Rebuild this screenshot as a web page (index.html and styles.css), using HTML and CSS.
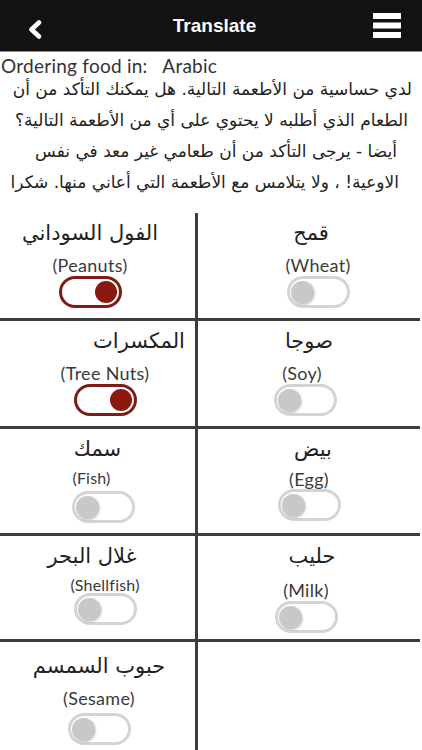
FILE: index.html
```html
<!DOCTYPE html>
<html lang="en">
<head>
<meta charset="utf-8">
<title>Translate</title>
<link rel="stylesheet" href="styles.css">
</head>
<body>
<header class="topbar">
  <svg class="back" width="14" height="19" viewBox="0 0 14 19" aria-hidden="true"><polyline points="11,2.5 3.5,9.5 11,16.5" fill="none" stroke="#fff" stroke-width="4.6" stroke-linecap="round" stroke-linejoin="round"/></svg>
  <h1 class="title">Translate</h1>
  <svg class="menu" width="28" height="25" viewBox="0 0 28 25" aria-hidden="true"><rect x="0" y="0" width="28" height="6" fill="#fff"/><rect x="0" y="9.5" width="28" height="6" fill="#fff"/><rect x="0" y="19" width="28" height="6" fill="#fff"/></svg>
</header>

<p class="intro">Ordering food in:   Arabic</p>
<div class="message" dir="rtl">
  <div class="mline l1">لدي حساسية من الأطعمة التالية. هل يمكنك التأكد من أن</div>
  <div class="mline l2">الطعام الذي أطلبه لا يحتوي على أي من الأطعمة التالية؟</div>
  <div class="mline l3">أيضا - يرجى التأكد من أن طعامي غير معد في نفس</div>
  <div class="mline l4">الاوعية! ، ولا يتلامس مع الأطعمة التي أعاني منها. شكرا</div>
</div>

<section class="grid">
  <div class="row">
    <div class="cell left peanuts">
      <div class="ar">الفول السوداني</div>
      <div class="en">(Peanuts)</div>
      <div class="toggle on"><span class="knob"></span></div>
    </div>
    <div class="cell right wheat">
      <div class="ar">قمح</div>
      <div class="en">(Wheat)</div>
      <div class="toggle"><span class="knob"></span></div>
    </div>
  </div>
  <div class="row">
    <div class="cell left treenuts">
      <div class="ar">المكسرات</div>
      <div class="en">(Tree Nuts)</div>
      <div class="toggle on"><span class="knob"></span></div>
    </div>
    <div class="cell right soy">
      <div class="ar">صوجا</div>
      <div class="en">(Soy)</div>
      <div class="toggle"><span class="knob"></span></div>
    </div>
  </div>
  <div class="row">
    <div class="cell left fish">
      <div class="ar">سمك</div>
      <div class="en small">(Fish)</div>
      <div class="toggle"><span class="knob"></span></div>
    </div>
    <div class="cell right egg">
      <div class="ar">بيض</div>
      <div class="en">(Egg)</div>
      <div class="toggle"><span class="knob"></span></div>
    </div>
  </div>
  <div class="row">
    <div class="cell left shellfish">
      <div class="ar">غلال البحر</div>
      <div class="en small">(Shellfish)</div>
      <div class="toggle"><span class="knob"></span></div>
    </div>
    <div class="cell right milk">
      <div class="ar">حليب</div>
      <div class="en">(Milk)</div>
      <div class="toggle"><span class="knob"></span></div>
    </div>
  </div>
  <div class="row">
    <div class="cell left sesame">
      <div class="ar">حبوب السمسم</div>
      <div class="en">(Sesame)</div>
      <div class="toggle"><span class="knob"></span></div>
    </div>
    <div class="cell right"></div>
  </div>
</section>
</body>
</html>
```
FILE: styles.css
```css
html, body {
  margin: 0;
  padding: 0;
  background: #fff;
}
body {
  width: 422px;
  height: 750px;
  overflow: hidden;
  font-family: "Lato", "DejaVu Sans", sans-serif;
  color: #333;
}

/* top bar */
.topbar {
  height: 51px;
  background: #121212;
  border-bottom: 1px solid #8a8a8a;
  display: grid;
  grid-template-columns: 1fr auto 1fr;
  align-items: center;
  padding: 0 21px 0 28px;
}
.back {
  justify-self: start;
  margin-top: 7px;
}
.title {
  margin: 0;
  font-family: "Liberation Sans", "DejaVu Sans", sans-serif;
  font-weight: bold;
  font-size: 19px;
  color: #fff;
  line-height: 22px;
}
.menu {
  justify-self: end;
}

/* intro text */
.intro {
  margin: 0;
  padding: 3px 0 0 1px;
  font-size: 19px;
  letter-spacing: 0.25px;
  line-height: 22px;
  white-space: pre;
  color: #333;
}
.message {
  margin-top: -3px;
  font-family: "DejaVu Sans", sans-serif;
  font-size: 17px;
  line-height: 31px;
  color: #222;
}
.mline {
  white-space: nowrap;
  text-align: right;
}
.l1 { padding-right: 10px; }
.l2 { padding-right: 14px; }
.l3 { padding-right: 25px; }
.l4 { padding-right: 23px; }

/* allergen grid */
.grid {
  width: 420px;
  margin-top: 15px;
}
.row {
  display: flex;
  height: 105px;
  border-bottom: 3px solid #3d3d3d;
}
.row:nth-child(3) { height: 104px; }
.row:nth-child(4) { height: 103px; }
.row:last-child {
  border-bottom: none;
  height: 110px;
}
.cell {
  display: flex;
  flex-direction: column;
  align-items: center;
  padding-top: 4px;
  box-sizing: border-box;
}
.cell.left {
  width: 198px;
  border-right: 3px solid #3d3d3d;
}
.cell.right {
  flex: 1;
}
.ar {
  font-family: "DejaVu Sans", sans-serif;
  font-size: 21px;
  line-height: 32px;
  height: 32px;
  color: #222;
  white-space: nowrap;
}
.en {
  margin-top: 6px;
  font-size: 18px;
  letter-spacing: 0.3px;
  line-height: 20px;
  color: #3a3a3a;
  white-space: nowrap;
}
.en.small {
  margin-top: 4px;
  font-size: 16px;
  letter-spacing: 0.2px;
  line-height: 18px;
}

/* toggles */
.toggle {
  margin-top: 1px;
  width: 63px;
  height: 32px;
  box-sizing: border-box;
  border-radius: 16px;
  border: 3px solid #d4d4d4;
  background: #fff;
  display: flex;
  align-items: center;
  padding: 0 1px;
}
.knob {
  width: 23px;
  height: 23px;
  border-radius: 50%;
  background: #c8c8c8;
  box-shadow: 1px 1px 2px rgba(0, 0, 0, 0.18);
}
.toggle.on {
  border-color: #7c1c13;
  justify-content: flex-end;
  padding: 0 2px;
}
.toggle.on .knob {
  width: 22px;
  height: 22px;
  background: #8a1a10;
  box-shadow: none;
}

/* per-cell placement */
.peanuts { padding-right: 15px; }
.wheat { padding-left: 18px; }
.wheat .ar { margin-right: 14px; }
.treenuts { padding-left: 15px; }
.treenuts .ar { margin-left: 68px; }
.soy { padding-right: 8px; }
.soy .ar { margin-left: 8px; }
.soy .en { margin-right: 6px; }
.fish .en { margin-right: 12px; }
.fish .toggle { margin-left: 11px; margin-top: 4px; }
.egg .ar { margin-left: 8px; }
.egg .en { margin-top: 4px; }
.egg .toggle { margin-top: 0; }
.shellfish { padding-left: 15px; }
.shellfish .ar { margin-right: 26px; }
.shellfish .toggle { margin-top: -1px; }
.milk { padding-right: 6px; }
.milk .ar { margin-left: 12px; }
.milk .en { margin-top: 8px; }
.sesame { padding-left: 3px; padding-top: 8px; }
.sesame .toggle { margin-top: 5px; }
```
